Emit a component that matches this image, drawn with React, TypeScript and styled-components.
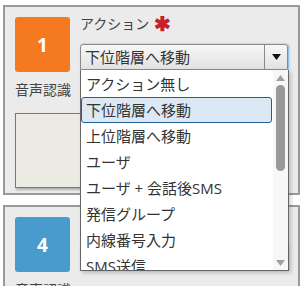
import React from "react";
import styled, { createGlobalStyle } from "styled-components";

const Global = createGlobalStyle`
  html, body { margin: 0; padding: 0; background: #ffffff; }
  body { font-family: "Open Sans", "Noto Sans CJK JP", sans-serif; color: #444; }
  * { box-sizing: border-box; }
`;

const Page = styled.div`
  position: relative;
  width: 304px;
  height: 286px;
  overflow: hidden;
  padding: 5px 0 0 3px;
  display: flex;
  flex-direction: column;
  gap: 10px;
`;

const Card = styled.div`
  width: 297px;
  height: 190px;
  flex: none;
  border: 2px solid #999;
  background: #ebebeb;
  padding: 10px 10px 0 10px;
  display: grid;
  grid-template-columns: 55px 1fr;
  grid-template-rows: 55px auto auto;
  column-gap: 10px;
`;

const NumBox = styled.div<{ $color: string }>`
  width: 55px;
  height: 55px;
  border-radius: 3px;
  background: ${(p) => p.$color};
  color: #fff;
  font-family: "Open Sans", sans-serif;
  font-weight: 700;
  font-size: 19px;
  display: flex;
  align-items: center;
  justify-content: center;
`;

const ActionCol = styled.div`
  display: flex;
  flex-direction: column;
  position: relative;
`;

const Label = styled.div`
  font-size: 14px;
  line-height: 20px;
  color: #444;
  display: flex;
  align-items: center;
  gap: 5px;
`;

const Required = styled.span`
  color: #c8202a;
  font-size: 20px;
  font-weight: 700;
  line-height: 20px;
`;

const ActionLabel = styled(Label)`
  margin-top: -3px;
  height: 20px;
`;

const Select = styled.div`
  margin-top: 10px;
  width: 208px;
  height: 26px;
  border: 1px solid #8a8a8a;
  border-radius: 3px 3px 0 0;
  background: linear-gradient(#f7f7f7, #e2e2e2);
  display: flex;
  align-items: stretch;
  box-shadow: 1px 0 2px rgba(90, 160, 230, 0.8);
`;

const SelectText = styled.div`
  flex: 1;
  font-size: 15px;
  line-height: 24px;
  padding-left: 4px;
  color: #333;
`;

const SelectButton = styled.div`
  width: 23px;
  border-left: 1px solid #8a8a8a;
  display: flex;
  align-items: center;
  justify-content: center;
`;

const VoiceLabel = styled(Label)`
  grid-column: 1 / span 2;
  margin-top: 8px;
  height: 20px;
`;

const TextArea = styled.div`
  grid-column: 1 / span 2;
  margin-top: 8px;
  width: 265px;
  height: 75px;
  border: 1px solid #777;
  background: #ebebe4;
  box-shadow: 1px 2px 2px rgba(0, 0, 0, 0.25);
`;

const Dropdown = styled.div`
  position: absolute;
  left: 80px;
  top: 70px;
  width: 209px;
  height: 201px;
  background: #fff;
  border: 1px solid #666;
  border-top: none;
  box-shadow: 2px 2px 4px rgba(0, 0, 0, 0.2);
  z-index: 10;
  display: flex;
  overflow: hidden;
`;

const List = styled.div`
  flex: 1;
  display: flex;
  flex-direction: column;
  padding-top: 1px;
`;

const Item = styled.div<{ $active?: boolean }>`
  flex: none;
  height: 26px;
  line-height: 24px;
  font-size: 15px;
  color: #333;
  padding-left: 4px;
  margin-right: 1px;
  border-radius: 3px;
  border: 1px solid ${(p) => (p.$active ? "#1f5f94" : "transparent")};
  background: ${(p) => (p.$active ? "#dce9f5" : "transparent")};
  white-space: nowrap;
`;

const Scrollbar = styled.div`
  width: 15px;
  flex: none;
  background: #f7f7f7;
  display: flex;
  flex-direction: column;
  align-items: center;
  padding: 5px 0 4px;
`;

const Thumb = styled.div`
  width: 9px;
  height: 86px;
  border-radius: 5px;
  background: #999;
  margin-top: 4px;
`;

const Spacer = styled.div`
  flex: 1;
`;

const Arrow = ({ up, color }: { up?: boolean; color: string }) => (
  <svg width="9" height="6" viewBox="0 0 9 6">
    {up ? <path d="M4.5 0 L9 6 L0 6 Z" fill={color} /> : <path d="M0 0 L9 0 L4.5 6 Z" fill={color} />}
  </svg>
);

const items = [
  "アクション無し",
  "下位階層へ移動",
  "上位階層へ移動",
  "ユーザ",
  "ユーザ + 会話後SMS",
  "発信グループ",
  "内線番号入力",
  "SMS送信",
];

const Block = ({ num, color }: { num: string; color: string }) => (
  <Card>
    <NumBox $color={color}>{num}</NumBox>
    <ActionCol>
      <ActionLabel>
        アクション<Required>✱</Required>
      </ActionLabel>
      <Select>
        <SelectText>下位階層へ移動</SelectText>
        <SelectButton>
          <Arrow color="#111" />
        </SelectButton>
      </Select>
    </ActionCol>
    <VoiceLabel>音声認識</VoiceLabel>
    <TextArea />
  </Card>
);

export default function App() {
  return (
    <>
      <Global />
      <Page>
        <Block num="1" color="#f47920" />
        <Block num="4" color="#4a9bcd" />
        <Dropdown>
          <List>
            {items.map((t, i) => (
              <Item key={t} $active={i === 1}>
                {t}
              </Item>
            ))}
          </List>
          <Scrollbar>
            <Arrow up color="#a0a0a0" />
            <Thumb />
            <Spacer />
            <Arrow color="#a0a0a0" />
          </Scrollbar>
        </Dropdown>
      </Page>
    </>
  );
}
